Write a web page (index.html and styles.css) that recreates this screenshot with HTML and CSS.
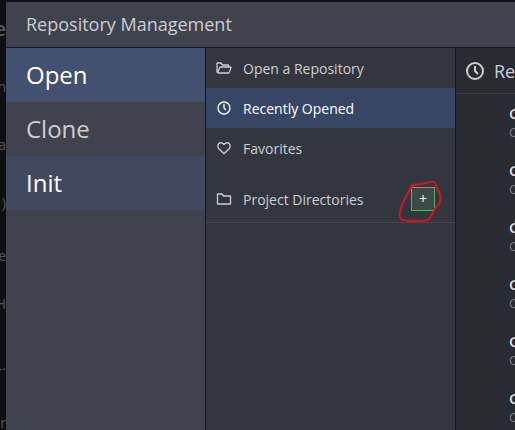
FILE: index.html
```
<!DOCTYPE html>
<html lang="en">
<head>
  <meta charset="UTF-8">
  <title>Repository Management</title>
  <link rel="stylesheet" href="styles.css">
</head>
<body>
  <!-- Strip of the page behind the dialog -->
  <ul class="backdrop">
    <li class="heading">e</li>
    <li>n</li>
    <li>a</li>
    <li>)</li>
    <li class="short">te</li>
    <li class="short">H</li>
    <li class="after-gap">L.</li>
    <li>or</li>
  </ul>

  <main class="dialog">
    <h1 class="dialog-title">Repository Management</h1>
    <div class="panels">
      <nav class="modes">
        <a href="#open" class="open">Open</a>
        <a href="#clone">Clone</a>
        <a href="#init" class="hover">Init</a>
      </nav>

      <nav class="sources">
        <a href="#browse" class="source">
          <svg class="icon" viewBox="0 0 16 16"><path d="M1 12.500V3.500q0-.5.5-.5H5l1.500 2H12q.5 0 .5.500V7M1.500 13l2.200-5.500q.2-.5.8-.5H14.500q.7 0 .5.600l-1.700 4.800q-.2.600-.8.600H1.500"/></svg>
          Open a Repository
        </a>
        <a href="#recent" class="source active">
          <svg class="icon" viewBox="0 0 16 16"><circle cx="8" cy="8" r="6"/><path d="M8 4v4l2 2"/></svg>
          Recently Opened
        </a>
        <a href="#favorites" class="source">
          <svg class="icon" viewBox="0 0 16 16"><path d="M8 13.800L2.900 8.700C1.500 7.200 1.500 4.900 2.900 3.600s3.500-1.200 5.100.9c1.600-2.100 3.700-2.200 5.100-.9s1.400 3.600 0 5.100z"/></svg>
          Favorites
        </a>
        <div class="directories">
          <svg class="icon" viewBox="0 0 16 16"><path d="M1.500 3h4.500l1.500 2h7v8h-13z"/></svg>
          Project Directories
          <div class="add">
            <button type="button" aria-label="Add project directory">+</button>
            <!-- Hand-drawn marker around the add button -->
            <svg class="marker" viewBox="0 0 46 44"><path d="M12 7C14 4 18 4 23 4L33 2Q37 1 38 6L42 14C43 19 43 23 39 26C36 29 35 34 31 39Q28 41 20 41C12 41 5 41 3 39C1 36 2 31 3 28C6 19 10 13 14 6"/></svg>
          </div>
        </div>
      </nav>

      <section class="repos">
        <h2>
          <svg class="icon" viewBox="0 0 20 20"><circle cx="10" cy="10" r="8"/><path d="M10 5v5l3 3"/></svg>
          Recently Opened
        </h2>
        <ul class="repo-list">
          <li><strong>C</strong><small>C:\</small></li>
          <li><strong>C</strong><small>C:\</small></li>
          <li><strong>C</strong><small>C:\</small></li>
          <li><strong>C</strong><small>C:\</small></li>
          <li><strong>C</strong><small>C:\</small></li>
          <li><strong>C</strong><small>C:\</small></li>
        </ul>
      </section>
    </div>
  </main>
</body>
</html>
```
FILE: styles.css
```
* {
  box-sizing: border-box;
}
body {
  margin: 0;
  height: 100vh;
  display: flex;
  overflow: hidden;
  background-color: #0d0f12;
  color: #ccced1;
  font-family: "Open Sans", "Noto Sans", sans-serif;
  font-size: 14px;
}
ul {
  list-style: none;
  margin: 0;
  padding: 0;
}
a {
  color: inherit;
  text-decoration: none;
}

/* Page behind the dialog */
.backdrop {
  flex: 0 0 6px;
  overflow: hidden;
  color: #55575b;
}
.backdrop li {
  display: flex;
  justify-content: flex-end;
  height: 58px;
  line-height: 58px;
}
.backdrop .heading {
  font-size: 20px;
  font-weight: 600;
}
.backdrop .short {
  height: 48px;
  line-height: 48px;
}
.backdrop .after-gap {
  margin-top: 8px;
}

.dialog {
  flex: 1;
  min-width: 0;
  display: flex;
  flex-direction: column;
  padding-top: 2px;
}
.dialog-title {
  margin: 0;
  padding: 0 20px;
  line-height: 45px;
  border-bottom: 1px solid #15171b;
  background-color: #40434e;
  font-size: 18px;
  font-weight: 400;
}
.panels {
  flex: 1;
  min-height: 0;
  display: flex;
}

/* Left column */
.modes {
  flex: 0 0 200px;
  border-right: 1px solid #15171b;
  background-color: #40434e;
  font-size: 24px;
}
.modes a {
  display: block;
  padding: 0 20px;
  line-height: 54px;
}
.modes .open {
  background-color: #43506f;
  color: #fff;
}
.modes .hover {
  background-color: #42485f;
  color: #fff;
}

/* Middle column */
.sources {
  flex: 0 0 250px;
  border-right: 1px solid #15171b;
  background-color: #33363f;
}
.source,
.directories {
  display: flex;
  align-items: center;
  gap: 11px;
  height: 40px;
  padding: 0 20px 0 10px;
}
.source.active {
  background-color: #384666;
  color: #fff;
}
.directories {
  height: 47px;
  margin-top: 8px;
  border-bottom: 1px solid #454852;
}
.icon {
  flex: none;
  width: 16px;
  height: 16px;
  fill: none;
  stroke: currentColor;
  stroke-width: 1.3;
  stroke-linejoin: round;
}
.add {
  position: relative;
  margin-left: auto;
}
.add button {
  display: block;
  width: 24px;
  height: 24px;
  padding: 0;
  border: 1px solid #5fae63;
  background-color: #3a4a47;
  color: #fff;
  font: inherit;
  line-height: 22px;
}
.marker {
  position: absolute;
  left: -13px;
  top: -7px;
  width: 46px;
  height: 44px;
  fill: none;
  stroke: #d9141c;
  stroke-width: 2;
  pointer-events: none;
}

/* Right column */
.repos {
  flex: 1;
  min-width: 0;
  overflow: hidden;
  background-color: #282b32;
  white-space: nowrap;
}
.repos h2 {
  display: flex;
  align-items: center;
  gap: 9px;
  height: 46px;
  margin: 0;
  padding-left: 9px;
  border-bottom: 1px solid #3b3e46;
  font-size: 18px;
  font-weight: 400;
}
.repos h2 .icon {
  width: 20px;
  height: 20px;
  stroke-width: 2;
}
.repo-list {
  padding-left: 53px;
}
.repo-list li {
  height: 57px;
  padding-top: 10px;
}
.repo-list strong,
.repo-list small {
  display: block;
  line-height: 19px;
}
.repo-list strong {
  font-size: 15px;
  font-weight: 600;
  color: #dcdddf;
}
.repo-list small {
  font-size: 13px;
  color: #777a80;
}
```
